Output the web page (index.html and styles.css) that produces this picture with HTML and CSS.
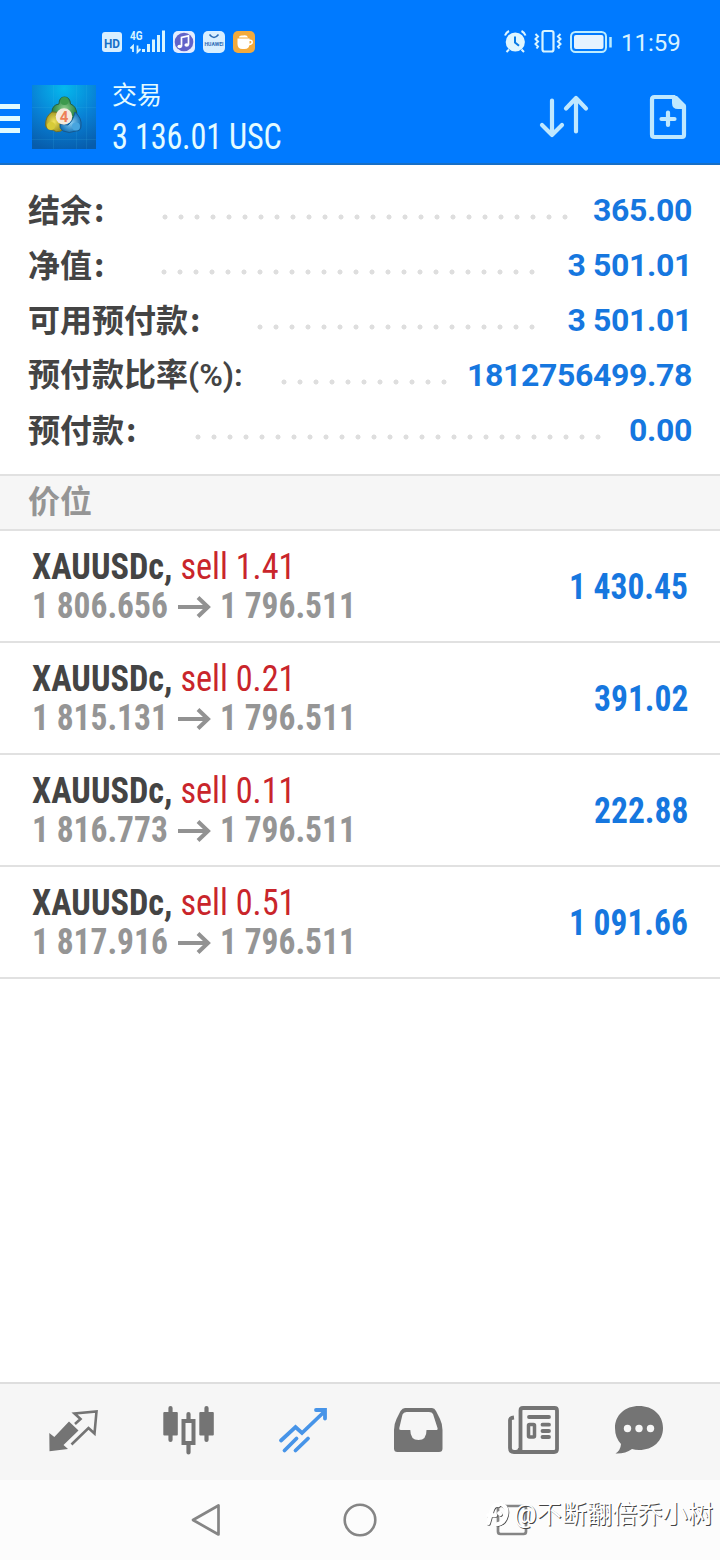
FILE: index.html
```html
<!DOCTYPE html>
<html lang="zh-CN">
<head>
<meta charset="utf-8">
<title>交易</title>
<link rel="stylesheet" href="styles.css">
</head>
<body>
<div class="screen">
  <header class="header">
    <div class="status">
      <svg class="status-left" width="160" height="26" viewBox="100 29 160 26">
        <rect x="102" y="32" width="20" height="20" rx="3" fill="#d9efff"/>
        <text x="112" y="47.500" class="hd" text-anchor="middle" textLength="16" lengthAdjust="spacingAndGlyphs">HD</text>
        <text x="130" y="40" class="net" textLength="12.500" lengthAdjust="spacingAndGlyphs">4G</text>
        <path d="M133 52v-6l-2.500 2.500M137.500 45.500v6.500l3-3" fill="none" stroke="#d9f5ff" stroke-width="1.800"/>
        <path d="M143.500 49v3M148.500 44v8M153.500 39.500v12.500M158.500 35v17M163.500 30.500v21.500" stroke="#d9f5ff" stroke-width="3" fill="none"/>
        <rect x="173" y="31" width="22" height="22" rx="5" fill="#e4edff"/>
        <circle cx="184" cy="42" r="9.300" fill="#6263c9"/>
        <path d="M181.500 46.500v-9l7-1.700v9" fill="none" stroke="#fff" stroke-width="1.700"/>
        <ellipse cx="179.700" cy="46.500" rx="2.300" ry="1.800" fill="#fff"/><ellipse cx="186.700" cy="45" rx="2.300" ry="1.800" fill="#fff"/>
        <rect x="203" y="31" width="22" height="22" rx="5" fill="#d8efff"/>
        <path d="M209.500 34.500q4.500 6 9 0" fill="none" stroke="#2b6cb5" stroke-width="1.500"/>
        <text x="214" y="46" class="brand" text-anchor="middle" textLength="19" lengthAdjust="spacingAndGlyphs">HUAWEI</text>
        <rect x="233" y="31" width="22" height="22" rx="5" fill="#f3aa3c"/>
        <path d="M237.500 38.500h12v5.500q0 5-5 5h-2q-5 0-5-5zM239 37.500q0-2.500 4-2 4-1 5 2z" fill="#fff"/>
        <path d="M249 40.200h1.200q2 0 2 2t-3.200 2.400" fill="none" stroke="#fff" stroke-width="1.500"/>
      </svg>
      <div class="status-right">
        <svg width="110" height="26" viewBox="503 29 110 26">
          <circle cx="515.300" cy="42" r="9.600" fill="#dff6ff"/>
          <path d="M505 35.500q1-3 4-4.500M525.500 35.500q-1-3-4-4.500M509 49.500l-2.500 2.500M521.500 49.500l2.500 2.500" stroke="#dff6ff" stroke-width="2" fill="none"/>
          <path d="M515 36.500v6l4 3.300" stroke="#087be5" stroke-width="2" fill="none"/>
          <rect x="542.500" y="31" width="11" height="20.500" rx="2" fill="none" stroke="#d8f4ff" stroke-width="2.200"/>
          <path d="M535.500 34l2.500 2.500-2.500 2.500 2.500 2.500-2.500 2.500 2.500 2.500-1.500 2M560.500 34l-2.500 2.500 2.500 2.500-2.500 2.500 2.500 2.500-2.500 2.500 1.500 2" fill="none" stroke="#d8f4ff" stroke-width="2"/>
          <rect x="571" y="32" width="35" height="20" rx="4.500" fill="none" stroke="#bcecff" stroke-width="2"/>
          <rect x="574" y="35" width="29.500" height="14" rx="2" fill="#e5f3ff"/>
          <path d="M610.500 37v10.500" stroke="#bcecff" stroke-width="2.500"/>
        </svg>
        <span class="clock">11:59</span>
      </div>
    </div>
    <div class="toolbar">
      <svg class="menu" width="20" height="30" viewBox="0 0 20 30"><path d="M0 3.500h20M0 15.500h20M0 27.500h20" stroke="#e0faff" stroke-width="5"/></svg>
      <svg class="logo" width="64" height="64" viewBox="0 0 64 64">
        <defs>
          <radialGradient id="bg" cx=".5" cy=".05" r="1"><stop offset="0" stop-color="#05b9ed"/><stop offset=".55" stop-color="#087fd4"/><stop offset="1" stop-color="#075cab"/></radialGradient>
          <radialGradient id="gr"><stop offset="0" stop-color="#8dcd8c"/><stop offset="1" stop-color="#23803e"/></radialGradient>
          <radialGradient id="ye"><stop offset="0" stop-color="#f3e45c"/><stop offset="1" stop-color="#a49a25"/></radialGradient>
          <radialGradient id="bl"><stop offset="0" stop-color="#8ed1f5"/><stop offset="1" stop-color="#1675ba"/></radialGradient>
        </defs>
        <path fill="url(#bg)" d="M0 0h64v64H0z"/>
        <path d="M21.500 0v64M44.500 0v64M54.500 0v64M0 22.500h64M0 54.500h64" stroke="#42b9ed" stroke-opacity=".15"/>
        <path d="M20 27q0-7 7-8 0-7 5.500-7t6 7q6 2 6.500 11l-5 5h-14z" fill="url(#gr)" stroke="#245f43"/>
        <path d="M20 27q9-1 10 8t-1 11q-5 2-8-1-7 0-7.500-5 0-9 6.500-13z" fill="url(#ye)" stroke="#756f24"/>
        <path d="M43 27q7 6 6 14 0 5-5 5-7 3-13 0-4-3-3-7l8 1q5-4 7-13z" fill="url(#bl)" stroke="#17588e"/>
        <circle cx="32.500" cy="16" r="4" fill="#3d9a4d"/><circle cx="19" cy="41" r="4" fill="#d7cb38"/><circle cx="44" cy="41.500" r="4" fill="#48a5df"/>
        <circle cx="32" cy="31.500" r="8.300" fill="#f4eadc"/>
        <text x="32" y="37" text-anchor="middle" class="four">4</text>
      </svg>
      <div class="titles">
        <div class="title">交易</div>
        <div class="total cond">3 136.01 USC</div>
      </div>
      <svg class="sort" width="52" height="46" viewBox="538 94 52 46"><path d="M552 100.500v34.500M542 125l10 10 10-10M576 131.500V98M566 108.500l10-10.500 10 10.500" fill="none" stroke="#bfe8ff" stroke-width="4.200" stroke-linecap="round" stroke-linejoin="round"/></svg>
      <svg class="new" width="38" height="46" viewBox="649 94 38 46"><path d="M654.500 97h19.500l10 10v28q0 2-2 2h-27.500q-2.500 0-2.500-2.500V99.500q0-2.500 2.500-2.500z" fill="none" stroke="#bfe8ff" stroke-width="4.200"/><path d="M672 96v7q0 6 6 6h7l1-4-9-9z" fill="#bfe8ff"/><path d="M668 112.500v12.500M661.500 119h13" stroke="#bfe8ff" stroke-width="4.200" stroke-linecap="round"/></svg>
    </div>
  </header>

  <section class="summary">
    <div class="row"><span class="label">结余<span class="colon">:</span></span><i class="dots d1"></i><b class="value">365.00</b></div>
    <div class="row"><span class="label">净值<span class="colon">:</span></span><i class="dots d2"></i><b class="value">3 501.01</b></div>
    <div class="row"><span class="label">可用预付款<span class="colon">:</span></span><i class="dots d3"></i><b class="value">3 501.01</b></div>
    <div class="row"><span class="label">预付款比率<span class="latin">(%):</span></span><i class="dots d4"></i><b class="value">1812756499.78</b></div>
    <div class="row"><span class="label">预付款<span class="colon">:</span></span><i class="dots d5"></i><b class="value">0.00</b></div>
  </section>

  <h2 class="section">价位</h2>

  <ul class="positions">
    <li><div class="cond"><div class="sym">XAUUSDc, <span class="side">sell 1.41</span></div><div class="prices"><span class="price">1 806.656</span><svg class="arrow" width="34" height="24" viewBox="0 0 34 24"><path d="M1 12h30M21 2.500l10 9.500-10 9.500" fill="none" stroke="#929292" stroke-width="4"/></svg><span class="price">1 796.511</span></div></div><b class="profit cond">1 430.45</b></li>
    <li><div class="cond"><div class="sym">XAUUSDc, <span class="side">sell 0.21</span></div><div class="prices"><span class="price">1 815.131</span><svg class="arrow" width="34" height="24" viewBox="0 0 34 24"><path d="M1 12h30M21 2.500l10 9.500-10 9.500" fill="none" stroke="#929292" stroke-width="4"/></svg><span class="price">1 796.511</span></div></div><b class="profit cond">391.02</b></li>
    <li><div class="cond"><div class="sym">XAUUSDc, <span class="side">sell 0.11</span></div><div class="prices"><span class="price">1 816.773</span><svg class="arrow" width="34" height="24" viewBox="0 0 34 24"><path d="M1 12h30M21 2.500l10 9.500-10 9.500" fill="none" stroke="#929292" stroke-width="4"/></svg><span class="price">1 796.511</span></div></div><b class="profit cond">222.88</b></li>
    <li><div class="cond"><div class="sym">XAUUSDc, <span class="side">sell 0.51</span></div><div class="prices"><span class="price">1 817.916</span><svg class="arrow" width="34" height="24" viewBox="0 0 34 24"><path d="M1 12h30M21 2.500l10 9.500-10 9.500" fill="none" stroke="#929292" stroke-width="4"/></svg><span class="price">1 796.511</span></div></div><b class="profit cond">1 091.66</b></li>
  </ul>

  <nav class="tabs">
    <svg width="52" height="52" viewBox="47 1404 52 52"><path d="M49.300 1433l5 4 14.700-15.500 9.500 9-15 14.500 4.500 4-18.500 2.300z" fill="#747474"/><path d="M75 1424l5.500-5-6-5.500 22-2-2 22-6-5.500-17 16.500" fill="none" stroke="#747474" stroke-width="2.600"/></svg>
    <svg width="52" height="52" viewBox="162 1404 52 52"><path d="M170.500 1408v32M206.500 1408v32M188.500 1414v8M188.500 1443v9.500" stroke="#747474" stroke-width="4.200" stroke-linecap="round"/><rect x="163.300" y="1412" width="14.500" height="23.500" rx="1" fill="#747474"/><rect x="199.300" y="1412" width="14.500" height="23.500" rx="1" fill="#747474"/><rect x="183.500" y="1421" width="10" height="22" fill="#f6f6f6" stroke="#747474" stroke-width="4"/></svg>
    <svg width="52" height="52" viewBox="277 1404 52 52"><path d="M281 1440.500l14.500-13.500 6.500 6 23-22M316 1410h9v8.500M284.500 1450.500l12-12M295.500 1450.500l12.500-12" fill="none" stroke="#4794e8" stroke-width="3.800" stroke-linecap="round" stroke-linejoin="miter"/></svg>
    <svg width="52" height="52" viewBox="392 1404 52 52"><path fill-rule="evenodd" d="M405 1408h27q2.500 0 4 3l4 8q2.500 5 2.500 11v18.500q0 3.500-3.500 3.500h-41.500q-3.500 0-3.500-3.500V1430q0-6 2.500-11l4-8q2-3 4.500-3zM406.500 1412q-3 0-4 2.500l-3.200 13.500q-.6 2 1.500 2h9.500q0 10 8.200 10t8-10h9.500q2.200 0 1.500-2l-4.500-14q-1-2-4-2z" fill="#747474"/></svg>
    <svg width="52" height="52" viewBox="507 1404 52 52"><path d="M520.500 1452v-41.500q0-2.500 2.500-2.500h31.500q2.500 0 2.500 2.500v38.500q0 3-3 3h-40q-4 0-4-4v-28q0-2 4-2.500M520 1448q0 4-4 4" fill="none" stroke="#747474" stroke-width="3.800" stroke-linejoin="round"/><path d="M529 1417h20M542.500 1424.700h6.500M542.500 1431h6.500M542.500 1437h6.500" stroke="#747474" stroke-width="3.800" stroke-linecap="round"/><rect x="528.500" y="1424.500" width="6" height="12.500" rx="1" fill="#f6f6f6" stroke="#747474" stroke-width="3.500"/></svg>
    <svg class="chat" width="52" height="52" viewBox="613 1404 52 52"><path d="M639 1406c14 0 24 9 24 22s-10 22-24 22q-4 0-7-1-7 5-16.500 4.500 5-3 5.500-9.500-6-6.500-6-16c0-13 10-22 24-22z" fill="#747474"/><g fill="#f6f6f6"><circle cx="627.500" cy="1428.500" r="3.700"/><circle cx="639" cy="1428.500" r="3.700"/><circle cx="650.500" cy="1428.500" r="3.700"/></g></svg>
  </nav>

  <footer class="system">
    <svg width="34" height="36" viewBox="190 1502 34 36"><path d="M218.500 1505.500v29L193 1520z" fill="none" stroke="#858585" stroke-width="2.700" stroke-linejoin="round"/></svg>
    <svg width="36" height="36" viewBox="342 1502 36 36"><circle cx="360" cy="1520" r="15.300" fill="none" stroke="#858585" stroke-width="2.600"/></svg>
    <svg width="34" height="36" viewBox="495 1502 34 36"><rect x="498" y="1506" width="28" height="28" rx="2.500" fill="none" stroke="#858585" stroke-width="2.700"/></svg>
    <div class="watermark">
      <svg width="26" height="28" viewBox="0 0 26 28"><g fill="none" stroke-linecap="round"><path d="M3 23L7 9Q9 4 13 5M3 15h7M16 4q7 3 5 11t-9 9M14 13l1 1" stroke="#444" stroke-width="3.600"/><path d="M2.200 22.200L6.200 8.200Q8.200 3.200 12.200 4.200M2.200 14.200h7M15.200 3.200q7 3 5 11t-9 9M13.200 12.200l1 1" stroke="#fff" stroke-width="4"/></g></svg>
      <span>@不断翻倍乔小树</span>
    </div>
  </footer>
</div>
</body>
</html>
```
FILE: styles.css
```css
* { box-sizing: border-box; }
body { margin: 0; background: #fff; }
svg { display: block; flex: none; overflow: visible; }
.screen { width: 720px; height: 1560px; display: flex; flex-direction: column; overflow: hidden; font-family: Roboto, "Noto Sans CJK SC", sans-serif; color: #444; }
.cond { font-family: "Roboto Condensed", Roboto, sans-serif; font-stretch: 75%; white-space: nowrap; }

.header { height: 165px; background: #007aff; border-bottom: 2px solid #176fc6; flex: none; }
.status { height: 84px; padding: 29px 38px 0 100px; display: flex; justify-content: space-between; align-items: flex-start; }
.status-right { display: flex; gap: 8px; }
.clock { width: 61px; font-size: 24px; line-height: 28px; color: #d9f3ff; white-space: nowrap; }
.hd { font: 700 13px Roboto, sans-serif; fill: #176fc7; }
.net { font: 700 13px Roboto, sans-serif; fill: #d9f5ff; }
.brand { font: 700 5px Roboto, sans-serif; fill: #2b6cb5; }
.four { font: 700 15px Roboto, sans-serif; fill: #ed8057; }
.toolbar { display: flex; align-items: flex-start; }
.menu { margin-top: 19px; }
.logo { margin: 1px 16px 0 12px; }
.titles { width: 426px; color: #e4fbff; }
.title { height: 34px; margin-top: -8px; font: 400 25px/34px "Noto Sans CJK SC", sans-serif; }
.total { margin-top: 3px; font-size: 36px; line-height: 48px; letter-spacing: -0.2px; transform: scaleX(0.895); transform-origin: left; }
.sort { margin-top: 10px; }
.new { margin: 10px 0 0 59px; }

.summary { height: 309px; padding: 17px 28px 0; flex: none; }
.row { height: 55px; display: flex; align-items: center; }
.label { margin-top: -2px; font: 700 32px/55px "Noto Sans CJK SC", sans-serif; white-space: nowrap; }
.colon { margin-left: 2px; }
.latin { font-family: Roboto, sans-serif; font-weight: 600; }
.dots { height: 6px; margin: 14px 0 0 auto; background: radial-gradient(circle at 3px 3px, #dedede 2.1px, transparent 2.9px) 0 0 / 16px 6px repeat-x; }
.d1 { width: 407px; margin-right: 24px; }
.d2 { width: 375px; margin-right: 31px; }
.d3 { width: 279px; margin-right: 31px; }
.d4 { width: 167px; margin-right: 19px; }
.d5 { width: 407px; margin-right: 27px; }
.value { font-size: 32px; font-weight: 680; line-height: 54px; letter-spacing: -0.35px; color: #1677df; white-space: nowrap; }

.section { height: 57px; margin: 0; padding-left: 28px; border: solid #e1e1e1; border-width: 2px 0; background: #f6f6f6; color: #959595; font: 700 32px/46px "Noto Sans CJK SC", sans-serif; flex: none; }
.positions { margin: 0; padding: 0; list-style: none; flex: 1; }
.positions li { height: 112px; padding: 2px 32px 0; border-bottom: 2px solid #e1e1e1; display: flex; justify-content: space-between; align-items: center; }
.sym { font-size: 36px; line-height: 39px; font-weight: 700; transform: scaleX(0.952); transform-origin: left; }
.side { color: #c9252b; font-weight: 400; }
.prices { display: flex; align-items: center; font-size: 36px; line-height: 39px; font-weight: 700; color: #959595; }
.price { width: 136px; transform: scaleX(0.93); transform-origin: left; }
.prices .price { min-width: 0; width: 136px; }
.price { transform-origin: 0 50%; }
.arrow { margin: 0 9px 0; }
.profit { font-size: 36px; color: #1677df; transform: scaleX(0.93); transform-origin: right; }

.tabs { height: 98px; padding: 20px 0 0 47px; display: flex; gap: 63px; background: #f6f6f6; border-top: 2px solid #dedede; flex: none; }
.chat { margin-left: -9px; }
.system { height: 80px; padding: 22px 191px 0 190px; display: flex; justify-content: space-between; background: #fcfcfc; position: relative; flex: none; }
.watermark { position: absolute; left: 486px; top: 17px; display: flex; gap: 1px; align-items: center; color: #fff; font: 400 25.2px/36px Roboto, "Noto Sans CJK SC", sans-serif; text-shadow: 1px 1px 0 #444; white-space: nowrap; }
.watermark span { margin-left: 1px; }
```
